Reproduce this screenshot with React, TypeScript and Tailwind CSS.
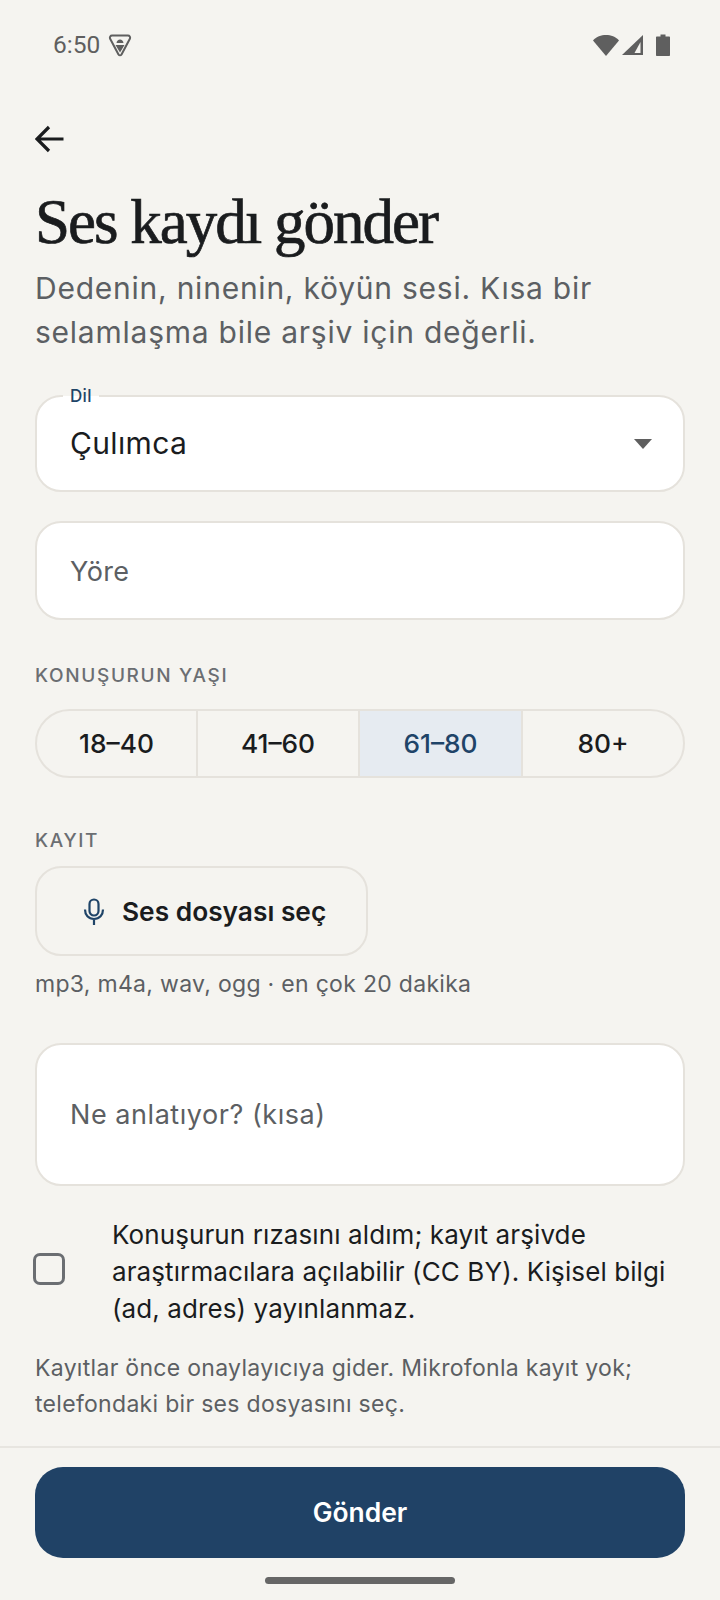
export default function App() {
  return (
    <div className="w-[720px] h-[1600px] bg-[#f5f4f0] flex flex-col overflow-hidden font-['Inter',sans-serif] text-[#1a1c1e]">
      {/* status bar */}
      <div className="h-[90px] shrink-0 flex items-center justify-between pl-[53px] pr-[47px] text-[#5f5f5f]">
        <div className="flex items-center gap-[8px]">
          <span className="font-['Roboto',sans-serif] text-[24.500px] leading-none">6:50</span>
          <svg width="24" height="24" viewBox="0 0 24 24" fill="none">
            <path d="M4 2.500h16c1.600 0 2.500 1.500 2 3L13.500 21.500c-.7 1-2.300 1-3 0L2 5.500c-.5-1.500.4-3 2-3z" stroke="#5f5f5f" strokeWidth="2" strokeLinejoin="round" />
            <path d="M8.500 10c.3-2.200 1.700-3.500 3.500-3.500s3.200 1.300 3.500 3.500zM7.500 12h9L12 19.500z" fill="#5f5f5f" />
          </svg>
        </div>
        <div className="flex items-center gap-[2px]">
          <svg width="28" height="24" viewBox="0 0 28 24"><path d="M1 7.500C4.500 3.500 9 2 14 2s9.500 1.500 13 5.500L14 23z" fill="#5f5f5f" /></svg>
          <svg width="22" height="22" viewBox="0 0 22 22"><path d="M21 1v20H0z" fill="#5f5f5f" /><path d="M18.500 8v11h-6z" fill="#f5f4f0" /></svg>
          <svg width="20" height="24" viewBox="0 0 20 24" className="ml-[7px]"><path d="M3 4.500c0-.6.400-1 1-1h3.500V1.500h5v2H16c.6 0 1 .4 1 1V22c0 .6-.4 1-1 1H4c-.6 0-1-.4-1-1z" fill="#5f5f5f" /></svg>
        </div>
      </div>

      <div className="flex-1 px-[35px] flex flex-col">
        <svg width="30" height="30" viewBox="0 0 30 30" fill="none" className="mt-[34px] shrink-0">
          <path d="M28.500 15H2M14 3 2 15l12 12" stroke="#1a1c1e" strokeWidth="3.200" />
        </svg>

        <h1 className="mt-[32px] font-['Liberation_Serif',serif] text-[63px] leading-[72px] font-normal tracking-[-2px] [-webkit-text-stroke:0.7px_#1a1c1e]">Ses kaydı gönder</h1>
        <p className="mt-[8px] text-[30px] leading-[44px] tracking-[0.76px] text-[#5c5f63]">Dedenin, ninenin, köyün sesi. Kısa bir<br />selamlaşma bile arşiv için değerli.</p>

        {/* Dil */}
        <div className="relative mt-[41px] h-[97px] bg-white border-2 border-[#e5e2dc] rounded-[26px] flex items-center justify-between pl-[33px] pr-[30px] text-[30px] tracking-[0.35px]">
          <span className="absolute -top-[11px] left-[26px] bg-[linear-gradient(#f5f4f0_50%,#ffffff_50%)] px-[7px] text-[17px] leading-[20px] font-medium text-[#1f4468] tracking-[0.3px]">Dil</span>
          <span>Çulımca</span>
          <svg width="20" height="12" viewBox="0 0 20 12"><path d="M1 1h18l-9 10z" fill="#5f5f5f" /></svg>
        </div>

        {/* Yöre */}
        <div className="mt-[29px] h-[99px] pt-[3px] bg-white border-2 border-[#e5e2dc] rounded-[26px] flex items-center pl-[33px] text-[27px] text-[#5c5f63] tracking-[0.4px]">Yöre</div>

        <div className="mt-[44px] text-[19px] leading-[24px] font-medium tracking-[1.650px] text-[#6b6e72]">KONUŞURUN YAŞI</div>

        {/* Segments */}
        <div className="mt-[21px] h-[69px] border-2 border-[#e5e2dc] rounded-[35px] overflow-hidden grid grid-cols-[161px_162px_163px_1fr] text-[26.300px] font-medium">
          <div className="flex items-center justify-center border-r-2 border-[#e5e2dc]">18–40</div>
          <div className="flex items-center justify-center border-r-2 border-[#e5e2dc]">41–60</div>
          <div className="flex items-center justify-center border-r-2 border-[#e5e2dc] bg-[#e6ebf1] text-[#1f4468]">61–80</div>
          <div className="flex items-center justify-center">80+</div>
        </div>

        <div className="mt-[51px] text-[19px] leading-[24px] font-medium tracking-[1.650px] text-[#6b6e72]">KAYIT</div>

        {/* File button */}
        <div className="mt-[13px] w-[333px] h-[90px] pt-[2px] border-2 border-[#e5e2dc] rounded-[26px] flex items-center pl-[46px] gap-[17px] text-[26.300px] font-semibold">
          <svg width="22" height="28" viewBox="0 0 22 28" fill="none" className="shrink-0" stroke="#1f4468" strokeWidth="2.200">
            <rect x="6.500" y="1.500" width="9" height="16" rx="4.500" />
            <path d="M2 11.500c0 5.500 3.500 9.500 9 9.500s9-4 9-9.500M11 21v6" />
          </svg>
          <span>Ses dosyası seç</span>
        </div>

        <div className="mt-[12px] text-[23px] leading-[32px] tracking-[0.3px] text-[#5c5f63]">mp3, m4a, wav, ogg · en çok 20 dakika</div>

        {/* Textarea */}
        <div className="mt-[43px] h-[143px] pt-[1px] bg-white border-2 border-[#e5e2dc] rounded-[26px] flex items-center pl-[33px] text-[27px] text-[#5c5f63] tracking-[0.55px]">Ne anlatıyor? (kısa)</div>

        {/* Consent */}
        <div className="mt-[30px] flex items-center gap-[47px]">
          <div className="w-[32px] h-[32px] -ml-[2px] -mt-[5px] shrink-0 rounded-[7px] border-[3px] border-[#6b6e72]"></div>
          <div className="text-[26px] leading-[37px] tracking-[0.1px]">Konuşurun rızasını aldım; kayıt arşivde<br />araştırmacılara açılabilir (CC BY). Kişisel bilgi<br />(ad, adres) yayınlanmaz.</div>
        </div>

        <div className="mt-[24px] text-[23px] leading-[35.500px] tracking-[0.3px] text-[#5c5f63]">Kayıtlar önce onaylayıcıya gider. Mikrofonla kayıt yok;<br />telefondaki bir ses dosyasını seç.</div>
      </div>

      {/* Footer */}
      <div className="shrink-0 h-[154px] border-t-2 border-[#e7e5e0] px-[35px] pt-[19px] flex flex-col items-center">
        <div className="w-full h-[91px] bg-[#204266] rounded-[28px] flex items-center justify-center text-[26.400px] font-semibold text-white">Gönder</div>
        <div className="mt-[19px] w-[190px] h-[7px] rounded-full bg-[#666666]"></div>
      </div>
    </div>
  );
}
